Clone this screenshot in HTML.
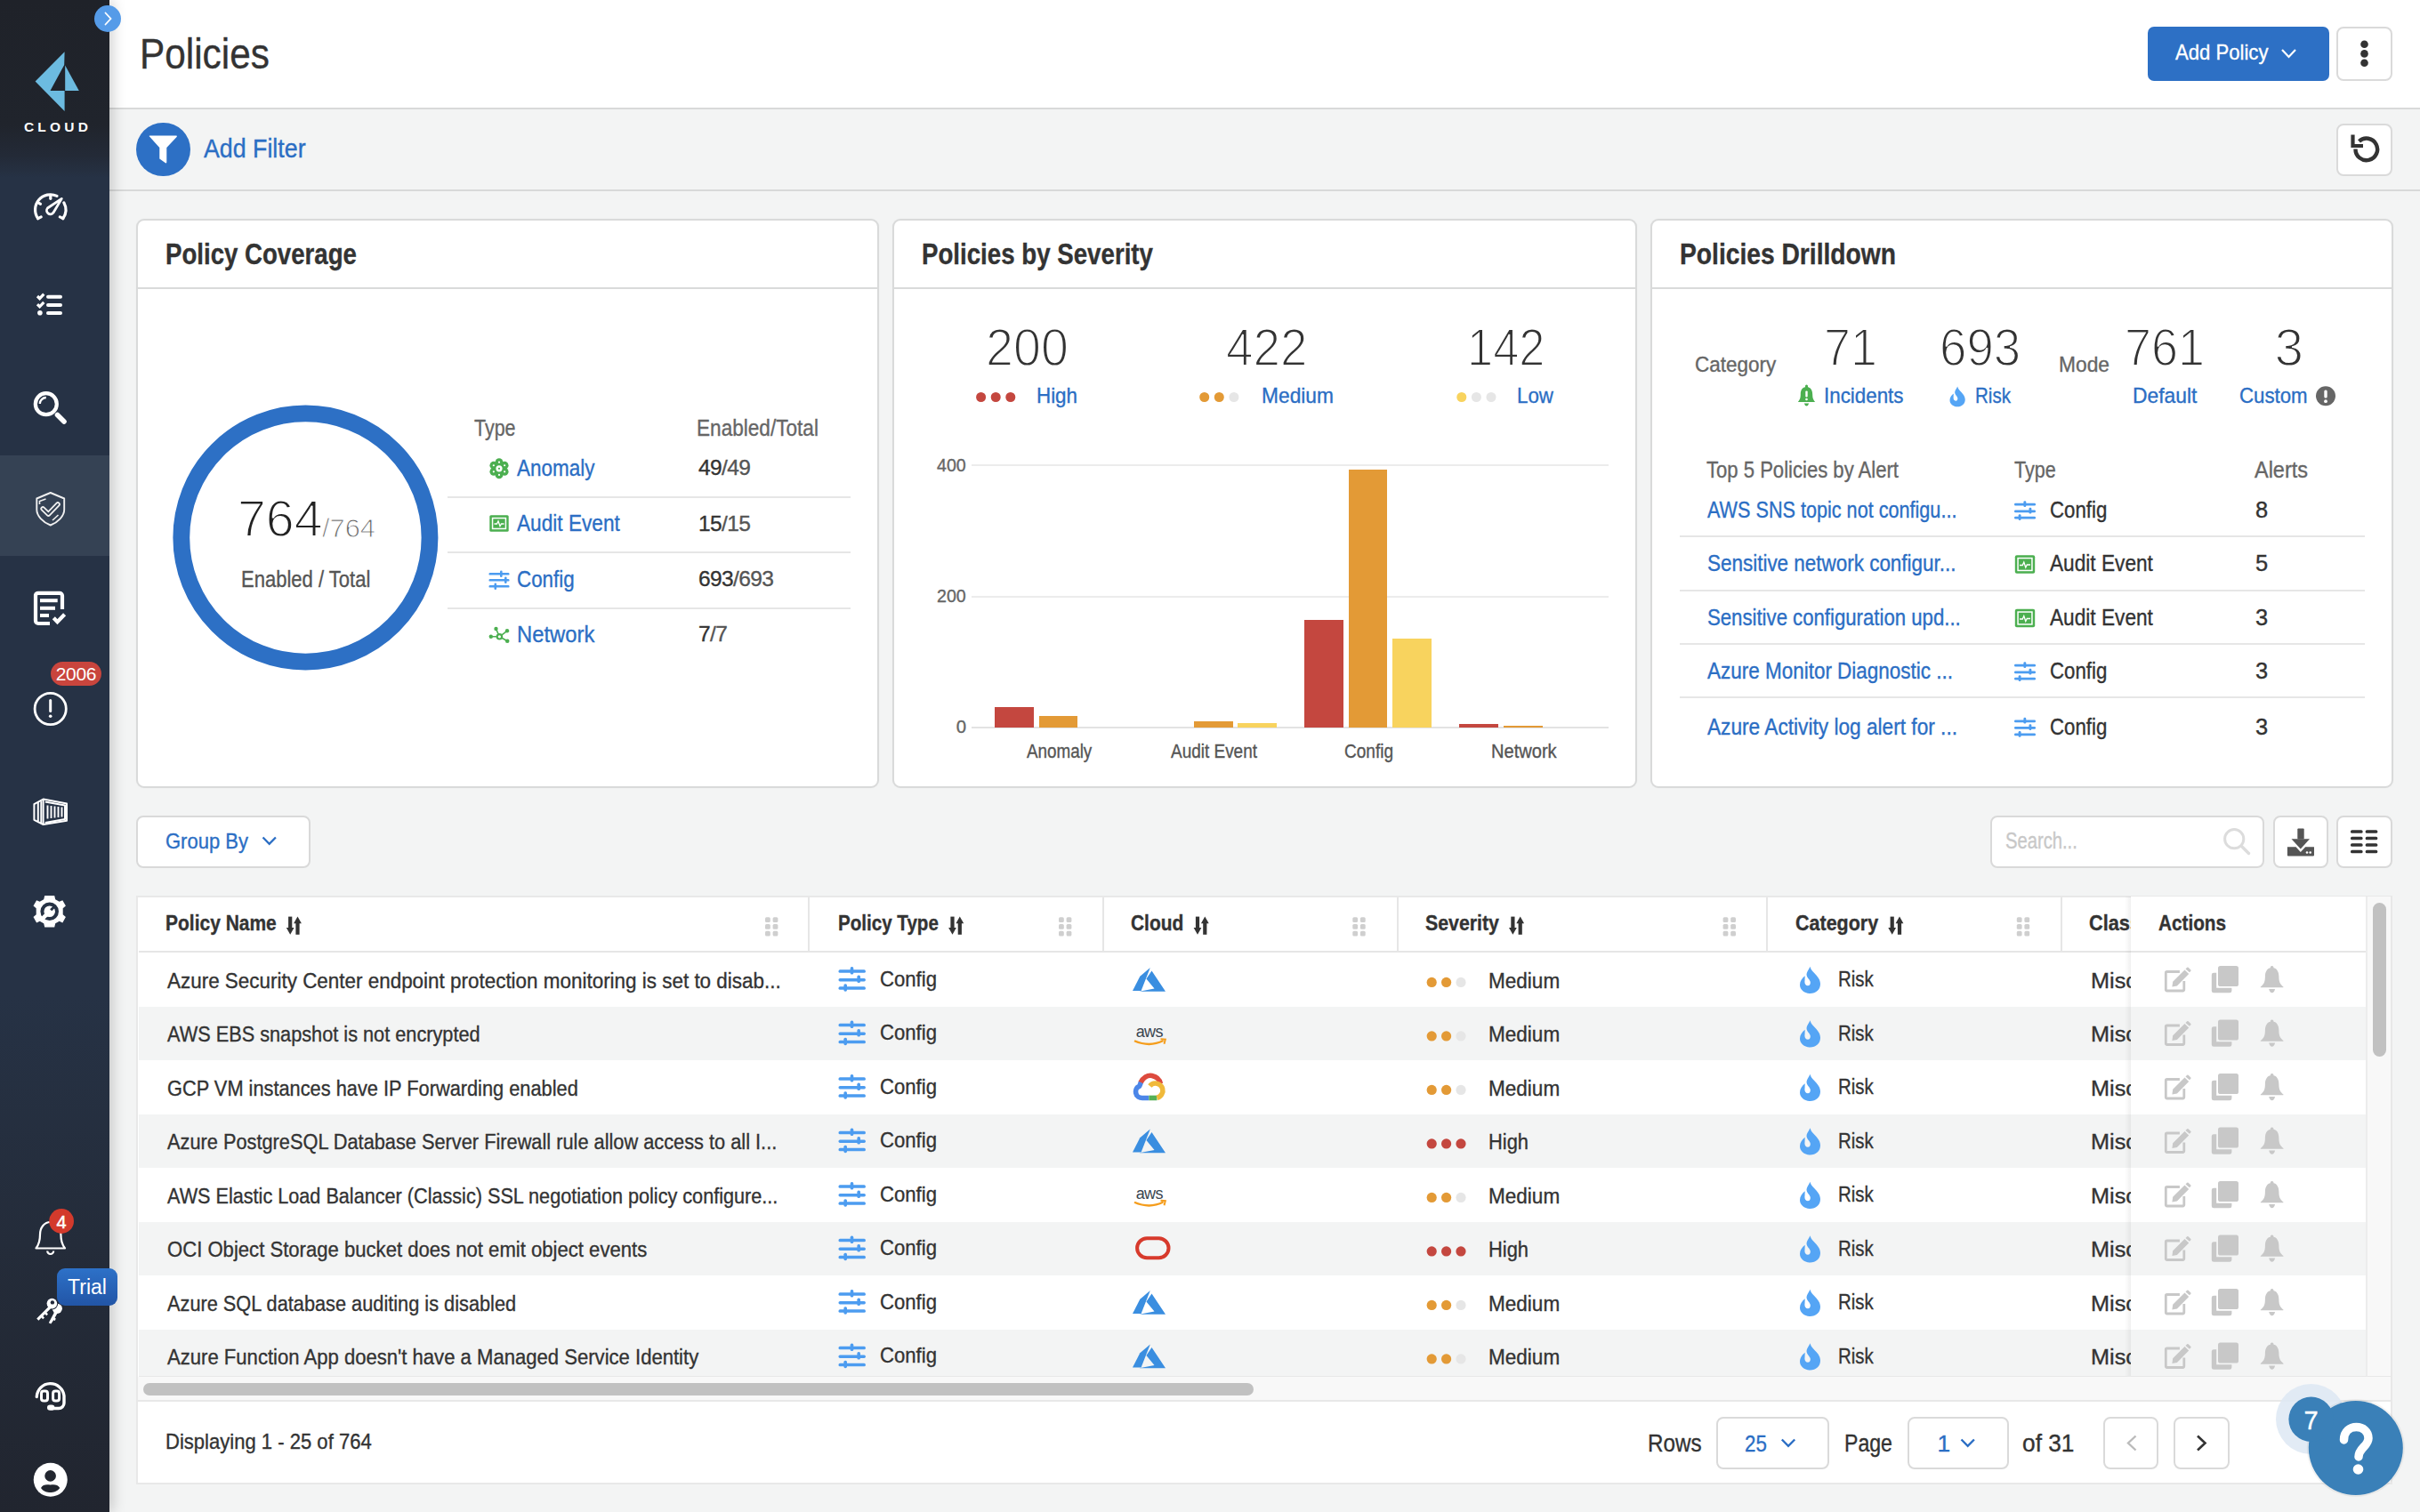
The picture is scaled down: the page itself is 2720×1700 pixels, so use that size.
<!DOCTYPE html>
<html><head><meta charset="utf-8">
<style>
*{box-sizing:border-box;margin:0;padding:0}
html,body{width:2720px;height:1700px;overflow:hidden;background:#f3f4f4;font-family:"Liberation Sans",sans-serif;color:#333}
.a{position:absolute}
.t{position:absolute;white-space:nowrap;-webkit-text-stroke:0.35px currentColor}
#side{position:absolute;left:0;top:0;width:123px;height:1700px;background:linear-gradient(180deg,#1f2229 0px,#20242c 140px,#232a37 175px,#263245 200px,#263245 1120px,#242c3a 1400px,#21252f 1700px);box-shadow:4px 0 14px rgba(0,0,0,.18);z-index:5}
</style></head><body>
<div id="side"><div class="a" style="left:0;top:512px;width:123px;height:113px;background:#354254"></div>
<svg class="a" style="left:0;top:0" width="123" height="1700" viewBox="0 0 123 1700">
<g fill="#6cbbe0"><path d="M72.6 58.2 L39.6 91.5 L72.6 124.9 L72.6 102.1 L56.5 102.1 L72.2 73 Z"/><path d="M73.2 73.5 L88.8 102.1 L73.2 102.1 Z"/></g>
<text x="65" y="148.3" text-anchor="middle" fill="#fff" font-family="Liberation Sans" font-weight="bold" font-size="15.5" letter-spacing="4.2">CLOUD</text>
<g fill="none" stroke="#fff" stroke-width="3.2" stroke-linecap="round">
<path d="M42.7 245.7 A17.1 17.1 0 0 1 64 220.4"/><path d="M71.8 227.8 A17.1 17.1 0 0 1 70.8 245.7"/>
<path d="M42.7 245.7 L46.2 243.9"/><path d="M70.8 245.7 L67.3 243.9"/><path d="M56.8 219.5 L56.8 223.3"/><path d="M42.5 227.6 L45.5 229.3"/>
</g>
<path d="M69.3 223.4 L59.9 239.2 A4.1 4.1 0 1 1 53.4 234 Z" fill="none" stroke="#fff" stroke-width="2.8" stroke-linejoin="round"/>
<g fill="none" stroke="#fff" stroke-width="3.2" stroke-linecap="butt">
<path d="M42 333 L44.6 335.6 L49.3 330.6"/><path d="M42 342.2 L44.6 344.8 L49.3 339.8"/>
</g>
<circle cx="44.9" cy="351.8" r="2.8" fill="#fff"/>
<g stroke="#fff" stroke-width="4" stroke-linecap="round"><path d="M54 333.8 H68"/><path d="M54 343 H68"/><path d="M54 351.9 H68"/></g>
<circle cx="51.8" cy="454.2" r="12" fill="none" stroke="#fff" stroke-width="4.2"/>
<path d="M44.8 454 A7 7 0 0 1 51.8 447" fill="none" stroke="#fff" stroke-width="2.4"/>
<path d="M64.5 466.5 L72 474" stroke="#fff" stroke-width="5.6" stroke-linecap="round"/>
<path d="M56.75 554 L41.3 560.5 L41.3 573 C41.3 580 48 587 56.75 590.5 C65.5 587 72.2 580 72.2 573 L72.2 560.5 Z" fill="none" stroke="#f0f0f0" stroke-width="1.9" stroke-linejoin="round"/>
<path d="M48.2 572 L54.4 578 L65 567" fill="none" stroke="#f0f0f0" stroke-width="5.6" stroke-linecap="round" stroke-linejoin="round"/>
<path d="M48.2 572 L54.4 578 L65 567" fill="none" stroke="#354254" stroke-width="2" stroke-linecap="round" stroke-linejoin="round"/>
<path d="M44.5 567 L44.5 563.5 L51.5 561" fill="none" stroke="#f0f0f0" stroke-width="1.6"/>
<path d="M59 585 L65.5 579" fill="none" stroke="#f0f0f0" stroke-width="1.6"/>
<path d="M56 701 H43 A3 3 0 0 1 40 698 V669 A3 3 0 0 1 43 666.8 H67 A3 3 0 0 1 70 669.8 V685" fill="none" stroke="#fff" stroke-width="4.2"/>
<g stroke="#fff" stroke-width="4"><path d="M45 675.2 H64.7"/><path d="M45 683.8 H62"/><path d="M45 692 H55"/></g>
<path d="M60.3 694.8 L64.5 699.3 L72.6 690.8" fill="none" stroke="#fff" stroke-width="4.2"/>
<circle cx="56.7" cy="797" r="17.6" fill="none" stroke="#fff" stroke-width="2.8"/>
<path d="M56.7 787.5 V799.5" stroke="#fff" stroke-width="3" stroke-linecap="round"/><circle cx="56.7" cy="805.3" r="1.8" fill="#fff"/>
<g fill="none" stroke="#fff" stroke-width="2" stroke-linejoin="round">
<path d="M38.4 904.2 L48.6 898.5 L75 903.4 L75 922.8 L48.6 927 L38.4 921.8 Z"/><path d="M48.6 898.5 V927"/><path d="M42.8 902 V923.5"/><path d="M46.3 900.5 V925"/>
<path d="M50.8 901.5 L73 905.5 V921 L50.8 925"/>
</g>
<g stroke="#fff" stroke-width="1.9"><path d="M53.5 905.5 V920.5"/><path d="M57.5 906 V920"/><path d="M61.5 906.5 V919.5"/><path d="M65.5 907 V919"/><path d="M69.5 907.5 V918.5"/></g>
<g transform="translate(55.7 1024.8)">
<path fill="#fff" d="M-5.5 -17.8 H5.5 L6.5 -13.5 L11 -11 L14.6 -12.6 L18.2 -6.3 L15 -3.5 V3.5 L18.2 6.3 L14.6 12.6 L11 11 L6.5 13.5 L5.5 17.8 H-5.5 L-6.5 13.5 L-11 11 L-14.6 12.6 L-18.2 6.3 L-15 3.5 V-3.5 L-18.2 -6.3 L-14.6 -12.6 L-11 -11 L-6.5 -13.5 Z"/>
<circle r="8.3" fill="none" stroke="#263245" stroke-width="4"/>
<path d="M-9 9 L-2 2" stroke="#fff" stroke-width="4.5"/>
<path d="M1.5 -1.5 L6 -6" stroke="#263245" stroke-width="3"/>
</g>
<path d="M40.5 1403.5 C44 1399 45 1395 45 1388 C45 1380 50 1374 56.7 1374 C63.4 1374 68.4 1380 68.4 1388 C68.4 1395 69.4 1399 73 1403.5 Z" fill="none" stroke="#fff" stroke-width="2.2" stroke-linejoin="round"/>
<path d="M53.2 1406.5 A3.5 3.5 0 0 0 60.2 1406.5" fill="none" stroke="#fff" stroke-width="2.2"/>
<circle cx="69.1" cy="1373" r="13.9" fill="#d33a2c"/>
<text x="69.1" y="1380.5" text-anchor="middle" fill="#fff" stroke="#fff" stroke-width="0.5" font-family="Liberation Sans" font-size="20">4</text>
<g fill="#fff" stroke="none">
<circle cx="64.3" cy="1471.3" r="5.6"/>
<path d="M61.5 1474.5 L54.8 1487.2 L57.3 1488.6 L60.2 1484.2 L61.8 1485 L62.8 1482.6 L61.6 1481.8 L64.6 1476.2 Z"/>
</g>
<circle cx="58.4" cy="1465.6" r="6.8" fill="#22293a"/>
<g fill="#fff" stroke="none">
<circle cx="58.4" cy="1465.6" r="5.8"/>
<path d="M55.4 1468.2 L41.2 1482.6 L43.4 1484.8 L46.6 1481.6 L48.2 1483.2 L50 1481.4 L48.4 1479.8 L50.6 1477.6 L52.2 1479.2 L54 1477.4 L52.4 1475.8 L58.6 1469.8 Z"/>
</g>
<circle cx="58.9" cy="1464.4" r="2.2" fill="#22293a"/>
<path d="M41.3 1570.5 A15.4 15.4 0 0 1 72 1569.4 V1577.5 A6 6 0 0 1 66 1583.5 H58" fill="none" stroke="#fff" stroke-width="3.4" stroke-linecap="round"/>
<rect x="46.5" y="1564.1" width="7" height="10.9" rx="2.6" fill="none" stroke="#fff" stroke-width="3"/>
<rect x="59.6" y="1564.1" width="7" height="10.9" rx="2.6" fill="none" stroke="#fff" stroke-width="3"/>
<rect x="53" y="1579.4" width="8.4" height="6.4" rx="3.2" fill="#fff"/>
<circle cx="56.75" cy="1663.8" r="19" fill="#fff"/>
<circle cx="56.6" cy="1659.4" r="6.3" fill="#22262f"/>
<path d="M46 1673 C48 1668.5 53 1669 56.6 1669.5 C60 1669 65 1668.5 67.3 1673 C64.5 1677 60 1678 56.6 1678 C53 1678 48.5 1677 46 1673 Z" fill="#22262f"/>
</svg>
<div class="a" style="left:57px;top:744px;width:57px;height:27px;border-radius:14px;background:#c9453d;color:#fff;font-size:21px;text-align:center;line-height:27px;letter-spacing:-0.3px">2006</div>
<div class="a" style="left:64px;top:1426px;width:68px;height:42px;border-radius:9px;background:linear-gradient(180deg,#2d71c8,#2255a6);color:#fff;font-size:23px;text-align:center;line-height:42px">Trial</div>
</div>
<div class="a" style="left:105.7px;top:5.8px;width:30.2px;height:30.2px;border-radius:50%;background:#559be8;z-index:6"><svg width="30" height="30" viewBox="0 0 30 30" style="position:absolute;left:0;top:0"><path d="M12.5 8.5 L18.5 15 L12.5 21.5" fill="none" stroke="#fff" stroke-width="1.8" stroke-linecap="round"/></svg></div>
<div class="a" style="left:123px;top:0px;width:2597px;height:121px;background:#fff"></div>
<div class="a" style="left:123px;top:121px;width:2597px;height:2px;background:#d8d9d9"></div>
<div class="a" style="left:123px;top:213px;width:2597px;height:2px;background:#d8d9d9"></div>
<div class="t" style="left:157.0px;top:36.8px;font-size:47.67px;line-height:47.67px;color:#333;transform:scaleX(0.8887);transform-origin:0 0;">Policies</div>
<div class="a" style="left:2414px;top:30px;width:204px;height:61px;background:#2d70c5;border-radius:7px"></div>
<div class="t" style="left:2445.0px;top:47.3px;font-size:24.71px;line-height:24.71px;color:#fff;transform:scaleX(0.8951);transform-origin:0 0;">Add Policy</div>
<svg class="a" style="left:2560px;top:50px" width="26" height="20"><path d="M5 6 L12.5 14 L20 6" fill="none" stroke="#fff" stroke-width="2.2"/></svg>
<div class="a" style="left:2626px;top:30px;width:63px;height:61px;background:#fff;border:2px solid #dadada;border-radius:8px"></div>
<svg class="a" style="left:2640px;top:40px" width="36" height="40"><g fill="#333"><circle cx="17.5" cy="9.8" r="4.3"/><circle cx="17.5" cy="20.4" r="4.3"/><circle cx="17.5" cy="30.8" r="4.3"/></g></svg>
<div class="a" style="left:153.2px;top:137.7px;width:60.4px;height:60.4px;background:#2d70c5;border-radius:50%"></div>
<svg class="a" style="left:153px;top:137px" width="61" height="61"><path d="M15 16.5 Q14 15.8 15.3 15.5 L45.3 15.5 Q46.5 15.8 45.6 17 L34.3 29 L34.3 45.5 Q34 46.8 33 46.3 L26.3 41.5 L26.3 29 Z" fill="#fff"/></svg>
<div class="t" style="left:228.6px;top:153.1px;font-size:28.78px;line-height:28.78px;color:#2b6ec4;transform:scaleX(0.9306);transform-origin:0 0;">Add Filter</div>
<div class="a" style="left:2626px;top:139px;width:63px;height:59px;background:#fff;border:2px solid #dadada;border-radius:8px"></div>
<svg class="a" style="left:2626px;top:139px" width="63" height="59"><path d="M21.5 28.5 A12.3 12.3 0 1 0 25.5 19.8" fill="none" stroke="#333" stroke-width="4.4"/><path d="M18.5 12.5 V25 H30" fill="none" stroke="#333" stroke-width="4.2"/></svg>
<div class="a" style="left:153px;top:245.5px;width:835px;height:640.5px;background:#fff;border:2px solid #d9dada;border-radius:9px;box-shadow:0 0 1.5px rgba(0,0,0,0.05)"></div>
<div class="a" style="left:155px;top:323px;width:831px;height:2px;background:#d9dada"></div>
<div class="t" style="left:185.8px;top:268.9px;font-size:32.99px;line-height:32.99px;color:#333;font-weight:bold;transform:scaleX(0.8375);transform-origin:0 0;">Policy Coverage</div>
<div class="a" style="left:1003px;top:245.5px;width:837px;height:640.5px;background:#fff;border:2px solid #d9dada;border-radius:9px;box-shadow:0 0 1.5px rgba(0,0,0,0.05)"></div>
<div class="a" style="left:1005px;top:323px;width:833px;height:2px;background:#d9dada"></div>
<div class="t" style="left:1035.8px;top:268.9px;font-size:32.99px;line-height:32.99px;color:#333;font-weight:bold;transform:scaleX(0.8389);transform-origin:0 0;">Policies by Severity</div>
<div class="a" style="left:1855px;top:245.5px;width:835px;height:640.5px;background:#fff;border:2px solid #d9dada;border-radius:9px;box-shadow:0 0 1.5px rgba(0,0,0,0.05)"></div>
<div class="a" style="left:1857px;top:323px;width:831px;height:2px;background:#d9dada"></div>
<div class="t" style="left:1887.8px;top:268.9px;font-size:32.99px;line-height:32.99px;color:#333;font-weight:bold;transform:scaleX(0.8551);transform-origin:0 0;">Policies Drilldown</div>
<svg class="a" style="left:190px;top:451px" width="310" height="310"><circle cx="153.4" cy="153.5" r="139.6" fill="none" stroke="#2d70c5" stroke-width="18.8"/></svg>
<div class="t" style="left:267.1px;top:555.2px;font-size:57.85px;line-height:57.85px;color:#222;transform:scaleX(0.9908);transform-origin:0 0;-webkit-text-stroke:1.8px #fff;">764</div>
<div class="t" style="left:362.2px;top:578.5px;font-size:29.94px;line-height:29.94px;color:#666;transform:scaleX(1.0297);transform-origin:0 0;-webkit-text-stroke:1px #fff;">/764</div>
<div class="t" style="left:271.0px;top:638.6px;font-size:25.29px;line-height:25.29px;color:#555;transform:scaleX(0.8713);transform-origin:0 0;">Enabled / Total</div>
<div class="t" style="left:533.0px;top:468.6px;font-size:25.29px;line-height:25.29px;color:#666;transform:scaleX(0.8481);transform-origin:0 0;">Type</div>
<div class="t" style="left:783.0px;top:468.6px;font-size:25.29px;line-height:25.29px;color:#666;transform:scaleX(0.8939);transform-origin:0 0;">Enabled/Total</div>
<div class="t" style="left:581.0px;top:512.5px;font-size:26.60px;line-height:26.60px;color:#2b6ec4;transform:scaleX(0.8445);transform-origin:0 0;">Anomaly</div>
<div class="t" style="left:785.0px;top:514.3px;font-size:24.50px;line-height:24.50px;color:#333;letter-spacing:-0.6px;">49<span style="color:#555">/49</span></div>
<div class="t" style="left:581.0px;top:575.0px;font-size:26.60px;line-height:26.60px;color:#2b6ec4;transform:scaleX(0.8513);transform-origin:0 0;">Audit Event</div>
<div class="t" style="left:785.0px;top:576.8px;font-size:24.50px;line-height:24.50px;color:#333;letter-spacing:-0.6px;">15<span style="color:#555">/15</span></div>
<div class="t" style="left:581.0px;top:637.5px;font-size:26.60px;line-height:26.60px;color:#2b6ec4;transform:scaleX(0.8414);transform-origin:0 0;">Config</div>
<div class="t" style="left:785.0px;top:639.3px;font-size:24.50px;line-height:24.50px;color:#333;letter-spacing:-0.6px;">693<span style="color:#555">/693</span></div>
<div class="t" style="left:581.0px;top:699.5px;font-size:26.60px;line-height:26.60px;color:#2b6ec4;transform:scaleX(0.8953);transform-origin:0 0;">Network</div>
<div class="t" style="left:785.0px;top:701.3px;font-size:24.50px;line-height:24.50px;color:#333;letter-spacing:-0.6px;">7<span style="color:#555">/7</span></div>
<div class="a" style="left:503px;top:557.5px;width:453px;height:2px;background:#e6e6e6"></div>
<div class="a" style="left:503px;top:620px;width:453px;height:2px;background:#e6e6e6"></div>
<div class="a" style="left:503px;top:683px;width:453px;height:2px;background:#e6e6e6"></div>
<svg class="a" style="left:545px;top:510px" width="32" height="220">
<g fill="#4caf50"><circle cx="16.00" cy="9.70" r="4.4"/><circle cx="22.15" cy="13.25" r="4.4"/><circle cx="22.15" cy="20.35" r="4.4"/><circle cx="16.00" cy="23.90" r="4.4"/><circle cx="9.85" cy="20.35" r="4.4"/><circle cx="9.85" cy="13.25" r="4.4"/><circle cx="16" cy="16.799999999999955" r="6.5"/></g><g fill="#fff"><circle cx="16.00" cy="9.70" r="1.1"/><circle cx="22.15" cy="13.25" r="1.1"/><circle cx="22.15" cy="20.35" r="1.1"/><circle cx="16.00" cy="23.90" r="1.1"/><circle cx="9.85" cy="20.35" r="1.1"/><circle cx="9.85" cy="13.25" r="1.1"/><circle cx="16" cy="16.799999999999955" r="3.6"/></g><circle cx="16" cy="16.799999999999955" r="1.1" fill="#4caf50"/>
<g transform="translate(4.5 68.5)"><rect x="0.8" y="0.8" width="21.4" height="18.4" rx="1.5" fill="#4caf50"/><rect x="3.3" y="3.3" width="16.4" height="13.4" fill="#fff"/><rect x="4.8" y="4.8" width="13.4" height="10.4" fill="#4caf50"/><path d="M6 10.5 H9 L10.5 7.5 L12.5 13 L14 10.5 H17" fill="none" stroke="#fff" stroke-width="1.3"/></g>
<g transform="translate(4.5 131)" fill="#4c9cf0"><rect x="0" y="3" width="23" height="2.6" rx="1.2"/><rect x="0" y="10" width="23" height="2.6" rx="1.2"/><rect x="0" y="17" width="23" height="2.6" rx="1.2"/><rect x="12.5" y="0.5" width="2.6" height="7.5" rx="1.2"/><rect x="17.5" y="7.5" width="2.6" height="7.5" rx="1.2"/><rect x="6" y="14.5" width="2.6" height="7.5" rx="1.2"/></g>
<g fill="#4caf50" stroke="#4caf50"><path d="M6.8 205.8 L16.4 205.8 M12.5 197.0 L16.4 205.8 M25.0 199.3 L16.4 205.8 M25.2 210.8 L16.4 205.8" stroke-width="1.6" fill="none"/><circle cx="6.8" cy="205.8" r="2.2" stroke="none"/><circle cx="12.5" cy="197.0" r="2.2" stroke="none"/><circle cx="25.0" cy="199.3" r="2.2" stroke="none"/><circle cx="25.2" cy="210.8" r="2.3" stroke="none"/><circle cx="16.4" cy="205.8" r="3.8" stroke="none"/></g><circle cx="16.4" cy="205.8" r="1.6" fill="#fff"/>
</svg>
<div class="t" style="left:1108.1px;top:361.7px;font-size:58.43px;line-height:58.43px;color:#333;transform:scaleX(0.9522);transform-origin:0 0;-webkit-text-stroke:1.8px #fff;">200</div>
<div class="t" style="left:1378.1px;top:361.7px;font-size:58.43px;line-height:58.43px;color:#333;transform:scaleX(0.9378);transform-origin:0 0;-webkit-text-stroke:1.8px #fff;">422</div>
<div class="t" style="left:1648.5px;top:361.7px;font-size:58.43px;line-height:58.43px;color:#333;transform:scaleX(0.8968);transform-origin:0 0;-webkit-text-stroke:1.8px #fff;">142</div>
<svg class="a" style="left:1004px;top:240px" width="835" height="640"><circle cx="98.6" cy="206.5" r="5.5" fill="#c4473f"/><circle cx="115.2" cy="206.5" r="5.5" fill="#c4473f"/><circle cx="131.8" cy="206.5" r="5.5" fill="#c4473f"/><circle cx="349.7" cy="206.5" r="5.5" fill="#e39a36"/><circle cx="366.3" cy="206.5" r="5.5" fill="#e39a36"/><circle cx="382.9" cy="206.5" r="5.5" fill="#e6e6e6"/><circle cx="638.8" cy="206.5" r="5.5" fill="#f8d35e"/><circle cx="655.4" cy="206.5" r="5.5" fill="#e6e6e6"/><circle cx="672.0" cy="206.5" r="5.5" fill="#e6e6e6"/></svg>
<div class="t" style="left:1165.0px;top:433.0px;font-size:24.13px;line-height:24.13px;color:#2b6ec4;transform:scaleX(0.9268);transform-origin:0 0;">High</div>
<div class="t" style="left:1418.0px;top:433.0px;font-size:24.13px;line-height:24.13px;color:#2b6ec4;transform:scaleX(0.9438);transform-origin:0 0;">Medium</div>
<div class="t" style="left:1705.0px;top:433.0px;font-size:24.13px;line-height:24.13px;color:#2b6ec4;transform:scaleX(0.9250);transform-origin:0 0;">Low</div>
<div class="a" style="left:1092px;top:522px;width:716px;height:2px;background:#ececec"></div>
<div class="a" style="left:1092px;top:669.5px;width:716px;height:2px;background:#ececec"></div>
<div class="a" style="left:1092px;top:816.5px;width:716px;height:2px;background:#e3e3e3"></div>
<div class="t" style="left:1053.3px;top:512.8px;font-size:20.35px;line-height:20.35px;color:#666;transform:scaleX(0.9634);transform-origin:0 0;">400</div>
<div class="t" style="left:1053.3px;top:660.3px;font-size:20.35px;line-height:20.35px;color:#666;transform:scaleX(0.9634);transform-origin:0 0;">200</div>
<div class="t" style="left:1074.7px;top:807.4px;font-size:20.35px;line-height:20.35px;color:#666;">0</div>
<div class="a" style="left:1118px;top:795px;width:43.6px;height:22.600000000000023px;background:#c4473f"></div>
<div class="a" style="left:1167.6px;top:804.6px;width:43.6px;height:13.0px;background:#e39a36"></div>
<div class="a" style="left:1342px;top:810.6px;width:43.6px;height:7.0px;background:#e39a36"></div>
<div class="a" style="left:1391px;top:813px;width:43.6px;height:4.600000000000023px;background:#f8d35e"></div>
<div class="a" style="left:1466px;top:696.6px;width:43.6px;height:121.0px;background:#c4473f"></div>
<div class="a" style="left:1515.6px;top:528px;width:43.6px;height:289.6px;background:#e39a36"></div>
<div class="a" style="left:1565px;top:717.6px;width:43.6px;height:100.0px;background:#f8d35e"></div>
<div class="a" style="left:1640px;top:813.6px;width:43.6px;height:4.0px;background:#c4473f"></div>
<div class="a" style="left:1690px;top:816px;width:43.6px;height:1.6000000000000227px;background:#e39a36"></div>
<div class="t" style="left:1153.8px;top:834.0px;font-size:21.80px;line-height:21.80px;color:#555;transform:scaleX(0.8641);transform-origin:0 0;">Anomaly</div>
<div class="t" style="left:1315.7px;top:834.0px;font-size:21.80px;line-height:21.80px;color:#555;transform:scaleX(0.8700);transform-origin:0 0;">Audit Event</div>
<div class="t" style="left:1511.0px;top:834.0px;font-size:21.80px;line-height:21.80px;color:#555;transform:scaleX(0.8726);transform-origin:0 0;">Config</div>
<div class="t" style="left:1675.7px;top:834.0px;font-size:21.80px;line-height:21.80px;color:#555;transform:scaleX(0.9211);transform-origin:0 0;">Network</div>
<div class="t" style="left:2050.0px;top:361.7px;font-size:58.43px;line-height:58.43px;color:#333;transform:scaleX(0.9219);transform-origin:0 0;-webkit-text-stroke:1.8px #fff;">71</div>
<div class="t" style="left:2179.7px;top:361.7px;font-size:58.43px;line-height:58.43px;color:#333;transform:scaleX(0.9358);transform-origin:0 0;-webkit-text-stroke:1.8px #fff;">693</div>
<div class="t" style="left:2388.4px;top:361.7px;font-size:58.43px;line-height:58.43px;color:#333;transform:scaleX(0.9234);transform-origin:0 0;-webkit-text-stroke:1.8px #fff;">761</div>
<div class="t" style="left:2556.5px;top:361.7px;font-size:58.43px;line-height:58.43px;color:#333;-webkit-text-stroke:1.8px #fff;">3</div>
<div class="t" style="left:1904.9px;top:399.4px;font-size:23.69px;line-height:23.69px;color:#666;transform:scaleX(0.9496);transform-origin:0 0;">Category</div>
<div class="t" style="left:2314.0px;top:399.4px;font-size:23.69px;line-height:23.69px;color:#666;transform:scaleX(0.9620);transform-origin:0 0;">Mode</div>
<div class="t" style="left:2050.0px;top:433.0px;font-size:24.13px;line-height:24.13px;color:#2b6ec4;transform:scaleX(0.9269);transform-origin:0 0;">Incidents</div>
<div class="t" style="left:2220.0px;top:433.0px;font-size:24.13px;line-height:24.13px;color:#2b6ec4;transform:scaleX(0.8519);transform-origin:0 0;">Risk</div>
<div class="t" style="left:2396.6px;top:433.0px;font-size:24.13px;line-height:24.13px;color:#2b6ec4;transform:scaleX(0.9472);transform-origin:0 0;">Default</div>
<div class="t" style="left:2517.0px;top:433.0px;font-size:24.13px;line-height:24.13px;color:#2b6ec4;transform:scaleX(0.9216);transform-origin:0 0;">Custom</div>
<svg class="a" style="left:2015px;top:430px" width="620" height="32"><path d="M15.5 5 C10.5 5 8.8 9 8.8 13.5 C8.8 18 7.5 20 5.8 22 H25.2 C23.5 20 22.2 18 22.2 13.5 C22.2 9 20.5 5 15.5 5 Z" fill="#4caf50"/><rect x="14" y="2.5" width="3" height="4" rx="1.5" fill="#4caf50"/><path d="M12.8 23.5 H18.2 Q17.3 26.5 15.5 26.5 Q13.7 26.5 12.8 23.5 Z" fill="#4caf50"/><rect x="14.3" y="9.5" width="2.4" height="7" rx="1" fill="#fff"/><circle cx="15.5" cy="19" r="1.3" fill="#fff"/><path transform="translate(176.5 4.5) scale(0.75)" fill="#55a5f5" d="M11.5 0 C10.5 3 7.5 5.5 7.5 9 C7.5 12 10.5 14 11.5 16.5 C12.5 19 11 21.5 9 21.5 C6.5 21.5 5 19 5.5 16 L5.7 10.5 C2.5 13 0 16.5 0 20.5 C0 26 5 30.2 11.5 30.2 C18 30.2 23 26 23 19.5 C23 13 17.5 9 14.5 5.5 C13 4 12 2 11.5 0 Z"/><circle cx="599" cy="15.2" r="11" fill="#666"/><rect x="597.3" y="8.5" width="3.4" height="9" rx="1.5" fill="#fff"/><circle cx="599" cy="21.2" r="1.9" fill="#fff"/></svg>
<div class="t" style="left:1917.7px;top:515.5px;font-size:25.44px;line-height:25.44px;color:#666;transform:scaleX(0.8680);transform-origin:0 0;">Top 5 Policies by Alert</div>
<div class="t" style="left:2264.0px;top:515.5px;font-size:25.44px;line-height:25.44px;color:#666;transform:scaleX(0.8469);transform-origin:0 0;">Type</div>
<div class="t" style="left:2533.6px;top:515.5px;font-size:25.44px;line-height:25.44px;color:#666;transform:scaleX(0.9229);transform-origin:0 0;">Alerts</div>
<div class="t" style="left:1919.0px;top:561.3px;font-size:25.44px;line-height:25.44px;color:#2b6ec4;transform:scaleX(0.8500);transform-origin:0 0;">AWS SNS topic not configu...</div>
<div class="t" style="left:2304.0px;top:561.3px;font-size:25.44px;line-height:25.44px;color:#333;transform:scaleX(0.8744);transform-origin:0 0;">Config</div>
<div class="t" style="left:2535.0px;top:561.3px;font-size:25.44px;line-height:25.44px;color:#333;">8</div>
<div class="t" style="left:1919.0px;top:621.3px;font-size:25.44px;line-height:25.44px;color:#2b6ec4;transform:scaleX(0.8825);transform-origin:0 0;">Sensitive network configur...</div>
<div class="t" style="left:2304.0px;top:621.3px;font-size:25.44px;line-height:25.44px;color:#333;transform:scaleX(0.8910);transform-origin:0 0;">Audit Event</div>
<div class="t" style="left:2535.0px;top:621.3px;font-size:25.44px;line-height:25.44px;color:#333;">5</div>
<div class="t" style="left:1919.0px;top:681.8px;font-size:25.44px;line-height:25.44px;color:#2b6ec4;transform:scaleX(0.8716);transform-origin:0 0;">Sensitive configuration upd...</div>
<div class="t" style="left:2304.0px;top:681.8px;font-size:25.44px;line-height:25.44px;color:#333;transform:scaleX(0.8910);transform-origin:0 0;">Audit Event</div>
<div class="t" style="left:2535.0px;top:681.8px;font-size:25.44px;line-height:25.44px;color:#333;">3</div>
<div class="t" style="left:1919.0px;top:742.3px;font-size:25.44px;line-height:25.44px;color:#2b6ec4;transform:scaleX(0.8834);transform-origin:0 0;">Azure Monitor Diagnostic ...</div>
<div class="t" style="left:2304.0px;top:742.3px;font-size:25.44px;line-height:25.44px;color:#333;transform:scaleX(0.8744);transform-origin:0 0;">Config</div>
<div class="t" style="left:2535.0px;top:742.3px;font-size:25.44px;line-height:25.44px;color:#333;">3</div>
<div class="t" style="left:1919.0px;top:804.9px;font-size:25.44px;line-height:25.44px;color:#2b6ec4;transform:scaleX(0.8913);transform-origin:0 0;">Azure Activity log alert for ...</div>
<div class="t" style="left:2304.0px;top:804.9px;font-size:25.44px;line-height:25.44px;color:#333;transform:scaleX(0.8744);transform-origin:0 0;">Config</div>
<div class="t" style="left:2535.0px;top:804.9px;font-size:25.44px;line-height:25.44px;color:#333;">3</div>
<div class="a" style="left:1888px;top:602px;width:770px;height:2px;background:#e6e6e6"></div>
<div class="a" style="left:1888px;top:662.5px;width:770px;height:2px;background:#e6e6e6"></div>
<div class="a" style="left:1888px;top:722.7px;width:770px;height:2px;background:#e6e6e6"></div>
<div class="a" style="left:1888px;top:783.4px;width:770px;height:2px;background:#e6e6e6"></div>
<svg class="a" style="left:2260px;top:555px" width="40" height="280"><g transform="translate(4 8) scale(0.79)" fill="#4c9cf0"><rect x="0" y="3.6" width="30.4" height="3.5" rx="1.6"/><rect x="0" y="13.2" width="30.4" height="3.5" rx="1.6"/><rect x="0" y="22.6" width="30.4" height="3.5" rx="1.6"/><rect x="13.2" y="0.3" width="3.6" height="8.5" rx="1.6"/><rect x="20.9" y="9.8" width="3.6" height="8.5" rx="1.6"/><rect x="5.9" y="19.4" width="3.6" height="8.5" rx="1.6"/></g><g transform="translate(4 68.5) scale(1.0)"><rect x="0.8" y="0.8" width="22.4" height="20.4" rx="2" fill="#4caf50"/><rect x="3.3" y="3.3" width="17.4" height="15.4" fill="#fff"/><rect x="4.8" y="4.8" width="14.4" height="12.4" fill="#4caf50"/><path d="M6 12 H9.3 L10.8 8.5 L12.8 14.5 L14.3 11.5 H18" fill="none" stroke="#fff" stroke-width="1.3"/></g><g transform="translate(4 129.0) scale(1.0)"><rect x="0.8" y="0.8" width="22.4" height="20.4" rx="2" fill="#4caf50"/><rect x="3.3" y="3.3" width="17.4" height="15.4" fill="#fff"/><rect x="4.8" y="4.8" width="14.4" height="12.4" fill="#4caf50"/><path d="M6 12 H9.3 L10.8 8.5 L12.8 14.5 L14.3 11.5 H18" fill="none" stroke="#fff" stroke-width="1.3"/></g><g transform="translate(4 189) scale(0.79)" fill="#4c9cf0"><rect x="0" y="3.6" width="30.4" height="3.5" rx="1.6"/><rect x="0" y="13.2" width="30.4" height="3.5" rx="1.6"/><rect x="0" y="22.6" width="30.4" height="3.5" rx="1.6"/><rect x="13.2" y="0.3" width="3.6" height="8.5" rx="1.6"/><rect x="20.9" y="9.8" width="3.6" height="8.5" rx="1.6"/><rect x="5.9" y="19.4" width="3.6" height="8.5" rx="1.6"/></g><g transform="translate(4 251.60000000000002) scale(0.79)" fill="#4c9cf0"><rect x="0" y="3.6" width="30.4" height="3.5" rx="1.6"/><rect x="0" y="13.2" width="30.4" height="3.5" rx="1.6"/><rect x="0" y="22.6" width="30.4" height="3.5" rx="1.6"/><rect x="13.2" y="0.3" width="3.6" height="8.5" rx="1.6"/><rect x="20.9" y="9.8" width="3.6" height="8.5" rx="1.6"/><rect x="5.9" y="19.4" width="3.6" height="8.5" rx="1.6"/></g></svg>
<div class="a" style="left:153px;top:916.5px;width:196px;height:59.5px;background:#fff;border:2px solid #d9d9d9;border-radius:8px"></div>
<div class="t" style="left:185.7px;top:933.8px;font-size:24.71px;line-height:24.71px;color:#2b6ec4;transform:scaleX(0.8901);transform-origin:0 0;">Group By</div>
<svg class="a" style="left:290px;top:935px" width="26" height="22"><path d="M5.5 6.5 L12.7 13.8 L19.9 6.5" fill="none" stroke="#2b6ec4" stroke-width="2.3"/></svg>
<div class="a" style="left:2237px;top:916.5px;width:308px;height:59.5px;background:#fff;border:2px solid #d9d9d9;border-radius:8px"></div>
<div class="t" style="left:2254.0px;top:932.9px;font-size:25.44px;line-height:25.44px;color:#c8c8c8;transform:scaleX(0.7938);transform-origin:0 0;">Search...</div>
<svg class="a" style="left:2490px;top:925px" width="45" height="45"><circle cx="21.2" cy="18.2" r="10.6" fill="none" stroke="#dcdcdc" stroke-width="3"/><path d="M29.5 26.5 L37.5 34.5" stroke="#dcdcdc" stroke-width="3.4" stroke-linecap="round"/></svg>
<div class="a" style="left:2554.5px;top:916.5px;width:62.5px;height:59.5px;background:#fff;border:2px solid #d9d9d9;border-radius:8px"></div>
<svg class="a" style="left:2554px;top:917px" width="63" height="59"><g fill="#555"><rect x="28.3" y="14.4" width="7.4" height="12" rx="1"/><path d="M21.5 26.2 H42 L31.8 37.5 Z"/><path d="M16.9 35.3 H26.5 L31.8 41 L37.2 35.3 H46.9 Q47 35.3 47 36 V44.5 Q46.9 45.4 46 45.4 H17.8 Q16.9 45.4 16.9 44.5 Z"/></g><circle cx="39" cy="41.5" r="1.3" fill="#fff"/><circle cx="42.7" cy="41.5" r="1.3" fill="#fff"/></svg>
<div class="a" style="left:2626.4px;top:916.5px;width:62.5px;height:59.5px;background:#fff;border:2px solid #d9d9d9;border-radius:8px"></div>
<svg class="a" style="left:2626px;top:917px" width="63" height="59"><g fill="#333"><rect x="16" y="16.25" width="13.6" height="3.5" rx="1.6"/><rect x="16" y="23.75" width="13.6" height="3.5" rx="1.6"/><rect x="16" y="31.25" width="13.6" height="3.5" rx="1.6"/><rect x="16" y="38.75" width="13.6" height="3.5" rx="1.6"/><rect x="32.7" y="16.25" width="13.6" height="3.5" rx="1.6"/><rect x="32.7" y="23.75" width="13.6" height="3.5" rx="1.6"/><rect x="32.7" y="31.25" width="13.6" height="3.5" rx="1.6"/><rect x="32.7" y="38.75" width="13.6" height="3.5" rx="1.6"/></g></svg>
<div class="a" style="left:153px;top:1007px;width:2536px;height:570px;background:#fff;border:2px solid #e8e8e8;border-bottom:none"></div>
<div class="a" style="left:156px;top:1069px;width:2503px;height:2px;background:#e6e6e6"></div>
<div class="a" style="left:908.3px;top:1009px;width:2px;height:60px;background:#e6e6e6"></div>
<div class="a" style="left:1238.5px;top:1009px;width:2px;height:60px;background:#e6e6e6"></div>
<div class="a" style="left:1569.5px;top:1009px;width:2px;height:60px;background:#e6e6e6"></div>
<div class="a" style="left:1985px;top:1009px;width:2px;height:60px;background:#e6e6e6"></div>
<div class="a" style="left:2316px;top:1009px;width:2px;height:60px;background:#e6e6e6"></div>
<div class="t" style="left:185.7px;top:1026.7px;font-size:23.69px;line-height:23.69px;color:#333;font-weight:bold;transform:scaleX(0.8858);transform-origin:0 0;">Policy Name</div>
<div class="t" style="left:941.9px;top:1026.7px;font-size:23.69px;line-height:23.69px;color:#333;font-weight:bold;transform:scaleX(0.8691);transform-origin:0 0;">Policy Type</div>
<div class="t" style="left:1271.0px;top:1026.7px;font-size:23.69px;line-height:23.69px;color:#333;font-weight:bold;transform:scaleX(0.8835);transform-origin:0 0;">Cloud</div>
<div class="t" style="left:1601.7px;top:1026.7px;font-size:23.69px;line-height:23.69px;color:#333;font-weight:bold;transform:scaleX(0.9001);transform-origin:0 0;">Severity</div>
<div class="t" style="left:2017.8px;top:1026.7px;font-size:23.69px;line-height:23.69px;color:#333;font-weight:bold;transform:scaleX(0.9075);transform-origin:0 0;">Category</div>
<svg class="a" style="left:0;top:1025px" width="2400" height="32"><g transform="translate(321.8 5.6)" fill="#333"><rect x="2.3" y="0" width="4.2" height="15" /><path d="M0 12.5 H8.8 L4.4 20.2 Z"/><rect x="10.6" y="5.2" width="4.2" height="15"/><path d="M8.3 7.7 H17.1 L12.7 0 Z"/></g><g transform="translate(1066.1 5.6)" fill="#333"><rect x="2.3" y="0" width="4.2" height="15" /><path d="M0 12.5 H8.8 L4.4 20.2 Z"/><rect x="10.6" y="5.2" width="4.2" height="15"/><path d="M8.3 7.7 H17.1 L12.7 0 Z"/></g><g transform="translate(1341.6 5.6)" fill="#333"><rect x="2.3" y="0" width="4.2" height="15" /><path d="M0 12.5 H8.8 L4.4 20.2 Z"/><rect x="10.6" y="5.2" width="4.2" height="15"/><path d="M8.3 7.7 H17.1 L12.7 0 Z"/></g><g transform="translate(1696.0 5.6)" fill="#333"><rect x="2.3" y="0" width="4.2" height="15" /><path d="M0 12.5 H8.8 L4.4 20.2 Z"/><rect x="10.6" y="5.2" width="4.2" height="15"/><path d="M8.3 7.7 H17.1 L12.7 0 Z"/></g><g transform="translate(2122.3 5.6)" fill="#333"><rect x="2.3" y="0" width="4.2" height="15" /><path d="M0 12.5 H8.8 L4.4 20.2 Z"/><rect x="10.6" y="5.2" width="4.2" height="15"/><path d="M8.3 7.7 H17.1 L12.7 0 Z"/></g></svg>
<svg class="a" style="left:0;top:1025px" width="2400" height="32"><rect x="860.0" y="6.2" width="5.8" height="5.8" rx="1.6" fill="#cfcfcf"/><rect x="860.0" y="14.0" width="5.8" height="5.8" rx="1.6" fill="#cfcfcf"/><rect x="860.0" y="21.8" width="5.8" height="5.8" rx="1.6" fill="#cfcfcf"/><rect x="868.6" y="6.2" width="5.8" height="5.8" rx="1.6" fill="#cfcfcf"/><rect x="868.6" y="14.0" width="5.8" height="5.8" rx="1.6" fill="#cfcfcf"/><rect x="868.6" y="21.8" width="5.8" height="5.8" rx="1.6" fill="#cfcfcf"/><rect x="1190.0" y="6.2" width="5.8" height="5.8" rx="1.6" fill="#cfcfcf"/><rect x="1190.0" y="14.0" width="5.8" height="5.8" rx="1.6" fill="#cfcfcf"/><rect x="1190.0" y="21.8" width="5.8" height="5.8" rx="1.6" fill="#cfcfcf"/><rect x="1198.6" y="6.2" width="5.8" height="5.8" rx="1.6" fill="#cfcfcf"/><rect x="1198.6" y="14.0" width="5.8" height="5.8" rx="1.6" fill="#cfcfcf"/><rect x="1198.6" y="21.8" width="5.8" height="5.8" rx="1.6" fill="#cfcfcf"/><rect x="1520.3" y="6.2" width="5.8" height="5.8" rx="1.6" fill="#cfcfcf"/><rect x="1520.3" y="14.0" width="5.8" height="5.8" rx="1.6" fill="#cfcfcf"/><rect x="1520.3" y="21.8" width="5.8" height="5.8" rx="1.6" fill="#cfcfcf"/><rect x="1528.9" y="6.2" width="5.8" height="5.8" rx="1.6" fill="#cfcfcf"/><rect x="1528.9" y="14.0" width="5.8" height="5.8" rx="1.6" fill="#cfcfcf"/><rect x="1528.9" y="21.8" width="5.8" height="5.8" rx="1.6" fill="#cfcfcf"/><rect x="1936.6" y="6.2" width="5.8" height="5.8" rx="1.6" fill="#cfcfcf"/><rect x="1936.6" y="14.0" width="5.8" height="5.8" rx="1.6" fill="#cfcfcf"/><rect x="1936.6" y="21.8" width="5.8" height="5.8" rx="1.6" fill="#cfcfcf"/><rect x="1945.2" y="6.2" width="5.8" height="5.8" rx="1.6" fill="#cfcfcf"/><rect x="1945.2" y="14.0" width="5.8" height="5.8" rx="1.6" fill="#cfcfcf"/><rect x="1945.2" y="21.8" width="5.8" height="5.8" rx="1.6" fill="#cfcfcf"/><rect x="2266.8" y="6.2" width="5.8" height="5.8" rx="1.6" fill="#cfcfcf"/><rect x="2266.8" y="14.0" width="5.8" height="5.8" rx="1.6" fill="#cfcfcf"/><rect x="2266.8" y="21.8" width="5.8" height="5.8" rx="1.6" fill="#cfcfcf"/><rect x="2275.4" y="6.2" width="5.8" height="5.8" rx="1.6" fill="#cfcfcf"/><rect x="2275.4" y="14.0" width="5.8" height="5.8" rx="1.6" fill="#cfcfcf"/><rect x="2275.4" y="21.8" width="5.8" height="5.8" rx="1.6" fill="#cfcfcf"/></svg>
<div class="t" style="left:2348.0px;top:1026.7px;font-size:23.69px;line-height:23.69px;color:#333;font-weight:bold;transform:scaleX(0.9176);transform-origin:0 0;">Class</div>
<div class="a" style="left:156px;top:1071px;width:2503px;height:476.5px;overflow:hidden">
<div class="t" style="left:31.5px;top:19.7px;font-size:24.42px;line-height:24.42px;color:#333;transform:scaleX(0.9193);transform-origin:0 0;">Azure Security Center endpoint protection monitoring is set to disab...</div>
<div class="t" style="left:832.8px;top:17.5px;font-size:23.84px;line-height:23.84px;color:#333;transform:scaleX(0.9287);transform-origin:0 0;">Config</div>
<div class="t" style="left:1517.0px;top:19.8px;font-size:24.42px;line-height:24.42px;color:#333;transform:scaleX(0.9234);transform-origin:0 0;">Medium</div>
<div class="t" style="left:1910.4px;top:18.0px;font-size:24.42px;line-height:24.42px;color:#333;transform:scaleX(0.8355);transform-origin:0 0;">Risk</div>
<div class="t" style="left:2194.0px;top:19.7px;font-size:24.42px;line-height:24.42px;color:#333;transform:scaleX(1.0363);transform-origin:0 0;">Misc</div>
<div class="a" style="left:0px;top:60.5px;width:2503px;height:60.5px;background:#f3f4f4"></div>
<div class="t" style="left:31.5px;top:80.2px;font-size:24.42px;line-height:24.42px;color:#333;transform:scaleX(0.8897);transform-origin:0 0;">AWS EBS snapshot is not encrypted</div>
<div class="t" style="left:832.8px;top:78.0px;font-size:23.84px;line-height:23.84px;color:#333;transform:scaleX(0.9287);transform-origin:0 0;">Config</div>
<div class="t" style="left:1517.0px;top:80.3px;font-size:24.42px;line-height:24.42px;color:#333;transform:scaleX(0.9234);transform-origin:0 0;">Medium</div>
<div class="t" style="left:1910.4px;top:78.5px;font-size:24.42px;line-height:24.42px;color:#333;transform:scaleX(0.8355);transform-origin:0 0;">Risk</div>
<div class="t" style="left:2194.0px;top:80.2px;font-size:24.42px;line-height:24.42px;color:#333;transform:scaleX(1.0363);transform-origin:0 0;">Misc</div>
<div class="t" style="left:31.5px;top:140.7px;font-size:24.42px;line-height:24.42px;color:#333;transform:scaleX(0.8926);transform-origin:0 0;">GCP VM instances have IP Forwarding enabled</div>
<div class="t" style="left:832.8px;top:138.5px;font-size:23.84px;line-height:23.84px;color:#333;transform:scaleX(0.9287);transform-origin:0 0;">Config</div>
<div class="t" style="left:1517.0px;top:140.8px;font-size:24.42px;line-height:24.42px;color:#333;transform:scaleX(0.9234);transform-origin:0 0;">Medium</div>
<div class="t" style="left:1910.4px;top:139.0px;font-size:24.42px;line-height:24.42px;color:#333;transform:scaleX(0.8355);transform-origin:0 0;">Risk</div>
<div class="t" style="left:2194.0px;top:140.7px;font-size:24.42px;line-height:24.42px;color:#333;transform:scaleX(1.0363);transform-origin:0 0;">Misc</div>
<div class="a" style="left:0px;top:181.5px;width:2503px;height:60.5px;background:#f3f4f4"></div>
<div class="t" style="left:31.5px;top:201.2px;font-size:24.42px;line-height:24.42px;color:#333;transform:scaleX(0.8920);transform-origin:0 0;">Azure PostgreSQL Database Server Firewall rule allow access to all I...</div>
<div class="t" style="left:832.8px;top:199.0px;font-size:23.84px;line-height:23.84px;color:#333;transform:scaleX(0.9287);transform-origin:0 0;">Config</div>
<div class="t" style="left:1517.0px;top:201.3px;font-size:24.42px;line-height:24.42px;color:#333;transform:scaleX(0.8959);transform-origin:0 0;">High</div>
<div class="t" style="left:1910.4px;top:199.5px;font-size:24.42px;line-height:24.42px;color:#333;transform:scaleX(0.8355);transform-origin:0 0;">Risk</div>
<div class="t" style="left:2194.0px;top:201.2px;font-size:24.42px;line-height:24.42px;color:#333;transform:scaleX(1.0363);transform-origin:0 0;">Misc</div>
<div class="t" style="left:31.5px;top:261.7px;font-size:24.42px;line-height:24.42px;color:#333;transform:scaleX(0.8866);transform-origin:0 0;">AWS Elastic Load Balancer (Classic) SSL negotiation policy configure...</div>
<div class="t" style="left:832.8px;top:259.5px;font-size:23.84px;line-height:23.84px;color:#333;transform:scaleX(0.9287);transform-origin:0 0;">Config</div>
<div class="t" style="left:1517.0px;top:261.8px;font-size:24.42px;line-height:24.42px;color:#333;transform:scaleX(0.9234);transform-origin:0 0;">Medium</div>
<div class="t" style="left:1910.4px;top:260.0px;font-size:24.42px;line-height:24.42px;color:#333;transform:scaleX(0.8355);transform-origin:0 0;">Risk</div>
<div class="t" style="left:2194.0px;top:261.7px;font-size:24.42px;line-height:24.42px;color:#333;transform:scaleX(1.0363);transform-origin:0 0;">Misc</div>
<div class="a" style="left:0px;top:302.5px;width:2503px;height:60.5px;background:#f3f4f4"></div>
<div class="t" style="left:31.5px;top:322.2px;font-size:24.42px;line-height:24.42px;color:#333;transform:scaleX(0.9054);transform-origin:0 0;">OCI Object Storage bucket does not emit object events</div>
<div class="t" style="left:832.8px;top:320.0px;font-size:23.84px;line-height:23.84px;color:#333;transform:scaleX(0.9287);transform-origin:0 0;">Config</div>
<div class="t" style="left:1517.0px;top:322.3px;font-size:24.42px;line-height:24.42px;color:#333;transform:scaleX(0.8959);transform-origin:0 0;">High</div>
<div class="t" style="left:1910.4px;top:320.5px;font-size:24.42px;line-height:24.42px;color:#333;transform:scaleX(0.8355);transform-origin:0 0;">Risk</div>
<div class="t" style="left:2194.0px;top:322.2px;font-size:24.42px;line-height:24.42px;color:#333;transform:scaleX(1.0363);transform-origin:0 0;">Misc</div>
<div class="t" style="left:31.5px;top:382.7px;font-size:24.42px;line-height:24.42px;color:#333;transform:scaleX(0.8910);transform-origin:0 0;">Azure SQL database auditing is disabled</div>
<div class="t" style="left:832.8px;top:380.5px;font-size:23.84px;line-height:23.84px;color:#333;transform:scaleX(0.9287);transform-origin:0 0;">Config</div>
<div class="t" style="left:1517.0px;top:382.8px;font-size:24.42px;line-height:24.42px;color:#333;transform:scaleX(0.9234);transform-origin:0 0;">Medium</div>
<div class="t" style="left:1910.4px;top:381.0px;font-size:24.42px;line-height:24.42px;color:#333;transform:scaleX(0.8355);transform-origin:0 0;">Risk</div>
<div class="t" style="left:2194.0px;top:382.7px;font-size:24.42px;line-height:24.42px;color:#333;transform:scaleX(1.0363);transform-origin:0 0;">Misc</div>
<div class="a" style="left:0px;top:423.5px;width:2503px;height:60.5px;background:#f3f4f4"></div>
<div class="t" style="left:31.5px;top:443.2px;font-size:24.42px;line-height:24.42px;color:#333;transform:scaleX(0.9049);transform-origin:0 0;">Azure Function App doesn't have a Managed Service Identity</div>
<div class="t" style="left:832.8px;top:441.0px;font-size:23.84px;line-height:23.84px;color:#333;transform:scaleX(0.9287);transform-origin:0 0;">Config</div>
<div class="t" style="left:1517.0px;top:443.3px;font-size:24.42px;line-height:24.42px;color:#333;transform:scaleX(0.9234);transform-origin:0 0;">Medium</div>
<div class="t" style="left:1910.4px;top:441.5px;font-size:24.42px;line-height:24.42px;color:#333;transform:scaleX(0.8355);transform-origin:0 0;">Risk</div>
<div class="t" style="left:2194.0px;top:443.2px;font-size:24.42px;line-height:24.42px;color:#333;transform:scaleX(1.0363);transform-origin:0 0;">Misc</div>
<svg class="a" style="left:-156px;top:-1071px" width="2720" height="1700"><g transform="translate(942.5 1086.75) scale(1.0)" fill="#4c9cf0"><rect x="0" y="3.6" width="30.4" height="3.5" rx="1.6"/><rect x="0" y="13.2" width="30.4" height="3.5" rx="1.6"/><rect x="0" y="22.6" width="30.4" height="3.5" rx="1.6"/><rect x="13.2" y="0.3" width="3.6" height="8.5" rx="1.6"/><rect x="20.9" y="9.8" width="3.6" height="8.5" rx="1.6"/><rect x="5.9" y="19.4" width="3.6" height="8.5" rx="1.6"/></g><g transform="translate(1273 1087.95)" fill="#3a8ee0"><path d="M19.8 0 L8.3 9.8 L0 26 H9.6 Z"/><path d="M21.5 3.5 L37 26.8 H7.5 L24.5 23.6 L15.4 12.6 Z"/></g><circle cx="1609.2" cy="1104.45" r="5.6" fill="#e39a36"/><circle cx="1625.6" cy="1104.45" r="5.6" fill="#e39a36"/><circle cx="1642.0" cy="1104.45" r="5.6" fill="#e6e6e6"/><path transform="translate(2023 1086.85)" fill="#55a5f5" d="M11.5 0 C10.5 3 7.5 5.5 7.5 9 C7.5 12 10.5 14 11.5 16.5 C12.5 19 11 21.5 9 21.5 C6.5 21.5 5 19 5.5 16 L5.7 10.5 C2.5 13 0 16.5 0 20.5 C0 26 5 30.2 11.5 30.2 C18 30.2 23 26 23 19.5 C23 13 17.5 9 14.5 5.5 C13 4 12 2 11.5 0 Z"/><g transform="translate(942.5 1147.25) scale(1.0)" fill="#4c9cf0"><rect x="0" y="3.6" width="30.4" height="3.5" rx="1.6"/><rect x="0" y="13.2" width="30.4" height="3.5" rx="1.6"/><rect x="0" y="22.6" width="30.4" height="3.5" rx="1.6"/><rect x="13.2" y="0.3" width="3.6" height="8.5" rx="1.6"/><rect x="20.9" y="9.8" width="3.6" height="8.5" rx="1.6"/><rect x="5.9" y="19.4" width="3.6" height="8.5" rx="1.6"/></g><text x="1291.8" y="1166.35" text-anchor="middle" font-family="Liberation Sans" font-size="18" fill="#3a4550" letter-spacing="-0.6">aws</text><path d="M1275 1170.25 Q1292 1177.75 1307.5 1170.05" fill="none" stroke="#f59d1c" stroke-width="2.4"/><path d="M1304.5 1168.25 L1309.8 1168.75 L1308.5 1173.75" fill="none" stroke="#f59d1c" stroke-width="2"/><circle cx="1609.2" cy="1164.95" r="5.6" fill="#e39a36"/><circle cx="1625.6" cy="1164.95" r="5.6" fill="#e39a36"/><circle cx="1642.0" cy="1164.95" r="5.6" fill="#e6e6e6"/><path transform="translate(2023 1147.35)" fill="#55a5f5" d="M11.5 0 C10.5 3 7.5 5.5 7.5 9 C7.5 12 10.5 14 11.5 16.5 C12.5 19 11 21.5 9 21.5 C6.5 21.5 5 19 5.5 16 L5.7 10.5 C2.5 13 0 16.5 0 20.5 C0 26 5 30.2 11.5 30.2 C18 30.2 23 26 23 19.5 C23 13 17.5 9 14.5 5.5 C13 4 12 2 11.5 0 Z"/><g transform="translate(942.5 1207.75) scale(1.0)" fill="#4c9cf0"><rect x="0" y="3.6" width="30.4" height="3.5" rx="1.6"/><rect x="0" y="13.2" width="30.4" height="3.5" rx="1.6"/><rect x="0" y="22.6" width="30.4" height="3.5" rx="1.6"/><rect x="13.2" y="0.3" width="3.6" height="8.5" rx="1.6"/><rect x="20.9" y="9.8" width="3.6" height="8.5" rx="1.6"/><rect x="5.9" y="19.4" width="3.6" height="8.5" rx="1.6"/></g><g transform="translate(1273.9 1207.95)" fill="none" stroke-width="5.6"><path d="M8 9.5 C10.5 3.5 16 0.5 21 1.5 C26 2.5 29.5 6 30.5 10.5" stroke="#dd4b3e"/><path d="M8.5 9 C7.5 11 7.5 12.5 6.5 13.5 C2.5 15 2.5 19.5 2.8 21 C3.5 25 7 26.5 10 26.5 H17.5" stroke="#4c86e8"/><path d="M17.5 26.5 H26.5" stroke="#54b055"/><path d="M18.5 13 C21 10 25 9.5 28.5 11 C33 13 34 18.5 32 22 C31 24 29.5 25.5 26.5 26.5" stroke="#f0b93a"/></g><circle cx="1609.2" cy="1225.45" r="5.6" fill="#e39a36"/><circle cx="1625.6" cy="1225.45" r="5.6" fill="#e39a36"/><circle cx="1642.0" cy="1225.45" r="5.6" fill="#e6e6e6"/><path transform="translate(2023 1207.85)" fill="#55a5f5" d="M11.5 0 C10.5 3 7.5 5.5 7.5 9 C7.5 12 10.5 14 11.5 16.5 C12.5 19 11 21.5 9 21.5 C6.5 21.5 5 19 5.5 16 L5.7 10.5 C2.5 13 0 16.5 0 20.5 C0 26 5 30.2 11.5 30.2 C18 30.2 23 26 23 19.5 C23 13 17.5 9 14.5 5.5 C13 4 12 2 11.5 0 Z"/><g transform="translate(942.5 1268.25) scale(1.0)" fill="#4c9cf0"><rect x="0" y="3.6" width="30.4" height="3.5" rx="1.6"/><rect x="0" y="13.2" width="30.4" height="3.5" rx="1.6"/><rect x="0" y="22.6" width="30.4" height="3.5" rx="1.6"/><rect x="13.2" y="0.3" width="3.6" height="8.5" rx="1.6"/><rect x="20.9" y="9.8" width="3.6" height="8.5" rx="1.6"/><rect x="5.9" y="19.4" width="3.6" height="8.5" rx="1.6"/></g><g transform="translate(1273 1269.45)" fill="#3a8ee0"><path d="M19.8 0 L8.3 9.8 L0 26 H9.6 Z"/><path d="M21.5 3.5 L37 26.8 H7.5 L24.5 23.6 L15.4 12.6 Z"/></g><circle cx="1609.2" cy="1285.95" r="5.6" fill="#c4473f"/><circle cx="1625.6" cy="1285.95" r="5.6" fill="#c4473f"/><circle cx="1642.0" cy="1285.95" r="5.6" fill="#c4473f"/><path transform="translate(2023 1268.35)" fill="#55a5f5" d="M11.5 0 C10.5 3 7.5 5.5 7.5 9 C7.5 12 10.5 14 11.5 16.5 C12.5 19 11 21.5 9 21.5 C6.5 21.5 5 19 5.5 16 L5.7 10.5 C2.5 13 0 16.5 0 20.5 C0 26 5 30.2 11.5 30.2 C18 30.2 23 26 23 19.5 C23 13 17.5 9 14.5 5.5 C13 4 12 2 11.5 0 Z"/><g transform="translate(942.5 1328.75) scale(1.0)" fill="#4c9cf0"><rect x="0" y="3.6" width="30.4" height="3.5" rx="1.6"/><rect x="0" y="13.2" width="30.4" height="3.5" rx="1.6"/><rect x="0" y="22.6" width="30.4" height="3.5" rx="1.6"/><rect x="13.2" y="0.3" width="3.6" height="8.5" rx="1.6"/><rect x="20.9" y="9.8" width="3.6" height="8.5" rx="1.6"/><rect x="5.9" y="19.4" width="3.6" height="8.5" rx="1.6"/></g><text x="1291.8" y="1347.85" text-anchor="middle" font-family="Liberation Sans" font-size="18" fill="#3a4550" letter-spacing="-0.6">aws</text><path d="M1275 1351.75 Q1292 1359.25 1307.5 1351.55" fill="none" stroke="#f59d1c" stroke-width="2.4"/><path d="M1304.5 1349.75 L1309.8 1350.25 L1308.5 1355.25" fill="none" stroke="#f59d1c" stroke-width="2"/><circle cx="1609.2" cy="1346.45" r="5.6" fill="#e39a36"/><circle cx="1625.6" cy="1346.45" r="5.6" fill="#e39a36"/><circle cx="1642.0" cy="1346.45" r="5.6" fill="#e6e6e6"/><path transform="translate(2023 1328.85)" fill="#55a5f5" d="M11.5 0 C10.5 3 7.5 5.5 7.5 9 C7.5 12 10.5 14 11.5 16.5 C12.5 19 11 21.5 9 21.5 C6.5 21.5 5 19 5.5 16 L5.7 10.5 C2.5 13 0 16.5 0 20.5 C0 26 5 30.2 11.5 30.2 C18 30.2 23 26 23 19.5 C23 13 17.5 9 14.5 5.5 C13 4 12 2 11.5 0 Z"/><g transform="translate(942.5 1389.25) scale(1.0)" fill="#4c9cf0"><rect x="0" y="3.6" width="30.4" height="3.5" rx="1.6"/><rect x="0" y="13.2" width="30.4" height="3.5" rx="1.6"/><rect x="0" y="22.6" width="30.4" height="3.5" rx="1.6"/><rect x="13.2" y="0.3" width="3.6" height="8.5" rx="1.6"/><rect x="20.9" y="9.8" width="3.6" height="8.5" rx="1.6"/><rect x="5.9" y="19.4" width="3.6" height="8.5" rx="1.6"/></g><rect x="1278.1" y="1392.25" width="35.4" height="22" rx="11" fill="none" stroke="#d73a2c" stroke-width="4"/><circle cx="1609.2" cy="1406.95" r="5.6" fill="#c4473f"/><circle cx="1625.6" cy="1406.95" r="5.6" fill="#c4473f"/><circle cx="1642.0" cy="1406.95" r="5.6" fill="#c4473f"/><path transform="translate(2023 1389.35)" fill="#55a5f5" d="M11.5 0 C10.5 3 7.5 5.5 7.5 9 C7.5 12 10.5 14 11.5 16.5 C12.5 19 11 21.5 9 21.5 C6.5 21.5 5 19 5.5 16 L5.7 10.5 C2.5 13 0 16.5 0 20.5 C0 26 5 30.2 11.5 30.2 C18 30.2 23 26 23 19.5 C23 13 17.5 9 14.5 5.5 C13 4 12 2 11.5 0 Z"/><g transform="translate(942.5 1449.75) scale(1.0)" fill="#4c9cf0"><rect x="0" y="3.6" width="30.4" height="3.5" rx="1.6"/><rect x="0" y="13.2" width="30.4" height="3.5" rx="1.6"/><rect x="0" y="22.6" width="30.4" height="3.5" rx="1.6"/><rect x="13.2" y="0.3" width="3.6" height="8.5" rx="1.6"/><rect x="20.9" y="9.8" width="3.6" height="8.5" rx="1.6"/><rect x="5.9" y="19.4" width="3.6" height="8.5" rx="1.6"/></g><g transform="translate(1273 1450.95)" fill="#3a8ee0"><path d="M19.8 0 L8.3 9.8 L0 26 H9.6 Z"/><path d="M21.5 3.5 L37 26.8 H7.5 L24.5 23.6 L15.4 12.6 Z"/></g><circle cx="1609.2" cy="1467.45" r="5.6" fill="#e39a36"/><circle cx="1625.6" cy="1467.45" r="5.6" fill="#e39a36"/><circle cx="1642.0" cy="1467.45" r="5.6" fill="#e6e6e6"/><path transform="translate(2023 1449.85)" fill="#55a5f5" d="M11.5 0 C10.5 3 7.5 5.5 7.5 9 C7.5 12 10.5 14 11.5 16.5 C12.5 19 11 21.5 9 21.5 C6.5 21.5 5 19 5.5 16 L5.7 10.5 C2.5 13 0 16.5 0 20.5 C0 26 5 30.2 11.5 30.2 C18 30.2 23 26 23 19.5 C23 13 17.5 9 14.5 5.5 C13 4 12 2 11.5 0 Z"/><g transform="translate(942.5 1510.25) scale(1.0)" fill="#4c9cf0"><rect x="0" y="3.6" width="30.4" height="3.5" rx="1.6"/><rect x="0" y="13.2" width="30.4" height="3.5" rx="1.6"/><rect x="0" y="22.6" width="30.4" height="3.5" rx="1.6"/><rect x="13.2" y="0.3" width="3.6" height="8.5" rx="1.6"/><rect x="20.9" y="9.8" width="3.6" height="8.5" rx="1.6"/><rect x="5.9" y="19.4" width="3.6" height="8.5" rx="1.6"/></g><g transform="translate(1273 1511.45)" fill="#3a8ee0"><path d="M19.8 0 L8.3 9.8 L0 26 H9.6 Z"/><path d="M21.5 3.5 L37 26.8 H7.5 L24.5 23.6 L15.4 12.6 Z"/></g><circle cx="1609.2" cy="1527.95" r="5.6" fill="#e39a36"/><circle cx="1625.6" cy="1527.95" r="5.6" fill="#e39a36"/><circle cx="1642.0" cy="1527.95" r="5.6" fill="#e6e6e6"/><path transform="translate(2023 1510.35)" fill="#55a5f5" d="M11.5 0 C10.5 3 7.5 5.5 7.5 9 C7.5 12 10.5 14 11.5 16.5 C12.5 19 11 21.5 9 21.5 C6.5 21.5 5 19 5.5 16 L5.7 10.5 C2.5 13 0 16.5 0 20.5 C0 26 5 30.2 11.5 30.2 C18 30.2 23 26 23 19.5 C23 13 17.5 9 14.5 5.5 C13 4 12 2 11.5 0 Z"/></svg>
</div>
<div class="a" style="left:2388px;top:1008px;width:7px;height:539.5px;background:linear-gradient(90deg,rgba(0,0,0,0),rgba(0,0,0,.06))"></div>
<div class="a" style="left:2395px;top:1008px;width:264px;height:539.5px;background:#fff;overflow:hidden">
<div class="a" style="left:0px;top:61px;width:264px;height:2px;background:#e6e6e6"></div>
<div class="a" style="left:0px;top:123.5px;width:264px;height:60.5px;background:#f3f4f4"></div>
<div class="a" style="left:0px;top:244.5px;width:264px;height:60.5px;background:#f3f4f4"></div>
<div class="a" style="left:0px;top:365.5px;width:264px;height:60.5px;background:#f3f4f4"></div>
<div class="a" style="left:0px;top:486.5px;width:264px;height:60.5px;background:#f3f4f4"></div>
</div>
<div class="t" style="left:2425.7px;top:1026.7px;font-size:23.69px;line-height:23.69px;color:#333;font-weight:bold;transform:scaleX(0.8759);transform-origin:0 0;">Actions</div>
<svg class="a" style="left:2400px;top:1060px" width="200" height="490"><g transform="translate(32.9 31.100000000000044)" fill="none" stroke="#c8c8c8" stroke-width="2.8"><path d="M17 1.4 H2.8 Q1.4 1.4 1.4 2.8 V21.5 Q1.4 22.9 2.8 22.9 H20.5 Q21.9 22.9 21.9 21.5 V12"/></g><path transform="translate(32.9 31.100000000000044)" d="M8.5 18.5 L9.3 12.6 L22.6 -0.7 L27.3 4 L14 17.3 Z M23.6 -1.7 L25.3 -3.4 Q26 -4 26.7 -3.4 L29.5 -0.6 Q30 0 29.5 0.7 L28 2.2 Z" fill="#c8c8c8"/><g transform="translate(85.8 26.000000000000046)" fill="#c8c8c8"><rect x="7.2" y="0" width="23" height="23" rx="2.6"/><path d="M0 10 Q0 7.7 2.4 7.7 H5.4 V24.8 H22.6 V28 Q22.6 30.3 20.2 30.3 H2.4 Q0 30.3 0 28 Z"/></g><g transform="translate(140.4 26.000000000000046)" fill="#c8c8c8"><path d="M13.25 2 C7.5 2 5.5 7 5.5 12 C5.5 18 4 20.5 0.5 23.5 Q0 24.2 0.8 24.2 H25.7 Q26.5 24.2 26 23.5 C22.5 20.5 21 18 21 12 C21 7 19 2 13.25 2 Z"/><rect x="11.5" y="0" width="3.5" height="4" rx="1.5"/><path d="M9.8 26 H16.7 Q15.5 30.3 13.25 30.3 Q11 30.3 9.8 26 Z"/></g><g transform="translate(32.9 91.60000000000005)" fill="none" stroke="#c8c8c8" stroke-width="2.8"><path d="M17 1.4 H2.8 Q1.4 1.4 1.4 2.8 V21.5 Q1.4 22.9 2.8 22.9 H20.5 Q21.9 22.9 21.9 21.5 V12"/></g><path transform="translate(32.9 91.60000000000005)" d="M8.5 18.5 L9.3 12.6 L22.6 -0.7 L27.3 4 L14 17.3 Z M23.6 -1.7 L25.3 -3.4 Q26 -4 26.7 -3.4 L29.5 -0.6 Q30 0 29.5 0.7 L28 2.2 Z" fill="#c8c8c8"/><g transform="translate(85.8 86.50000000000004)" fill="#c8c8c8"><rect x="7.2" y="0" width="23" height="23" rx="2.6"/><path d="M0 10 Q0 7.7 2.4 7.7 H5.4 V24.8 H22.6 V28 Q22.6 30.3 20.2 30.3 H2.4 Q0 30.3 0 28 Z"/></g><g transform="translate(140.4 86.50000000000004)" fill="#c8c8c8"><path d="M13.25 2 C7.5 2 5.5 7 5.5 12 C5.5 18 4 20.5 0.5 23.5 Q0 24.2 0.8 24.2 H25.7 Q26.5 24.2 26 23.5 C22.5 20.5 21 18 21 12 C21 7 19 2 13.25 2 Z"/><rect x="11.5" y="0" width="3.5" height="4" rx="1.5"/><path d="M9.8 26 H16.7 Q15.5 30.3 13.25 30.3 Q11 30.3 9.8 26 Z"/></g><g transform="translate(32.9 152.10000000000005)" fill="none" stroke="#c8c8c8" stroke-width="2.8"><path d="M17 1.4 H2.8 Q1.4 1.4 1.4 2.8 V21.5 Q1.4 22.9 2.8 22.9 H20.5 Q21.9 22.9 21.9 21.5 V12"/></g><path transform="translate(32.9 152.10000000000005)" d="M8.5 18.5 L9.3 12.6 L22.6 -0.7 L27.3 4 L14 17.3 Z M23.6 -1.7 L25.3 -3.4 Q26 -4 26.7 -3.4 L29.5 -0.6 Q30 0 29.5 0.7 L28 2.2 Z" fill="#c8c8c8"/><g transform="translate(85.8 147.00000000000006)" fill="#c8c8c8"><rect x="7.2" y="0" width="23" height="23" rx="2.6"/><path d="M0 10 Q0 7.7 2.4 7.7 H5.4 V24.8 H22.6 V28 Q22.6 30.3 20.2 30.3 H2.4 Q0 30.3 0 28 Z"/></g><g transform="translate(140.4 147.00000000000006)" fill="#c8c8c8"><path d="M13.25 2 C7.5 2 5.5 7 5.5 12 C5.5 18 4 20.5 0.5 23.5 Q0 24.2 0.8 24.2 H25.7 Q26.5 24.2 26 23.5 C22.5 20.5 21 18 21 12 C21 7 19 2 13.25 2 Z"/><rect x="11.5" y="0" width="3.5" height="4" rx="1.5"/><path d="M9.8 26 H16.7 Q15.5 30.3 13.25 30.3 Q11 30.3 9.8 26 Z"/></g><g transform="translate(32.9 212.60000000000005)" fill="none" stroke="#c8c8c8" stroke-width="2.8"><path d="M17 1.4 H2.8 Q1.4 1.4 1.4 2.8 V21.5 Q1.4 22.9 2.8 22.9 H20.5 Q21.9 22.9 21.9 21.5 V12"/></g><path transform="translate(32.9 212.60000000000005)" d="M8.5 18.5 L9.3 12.6 L22.6 -0.7 L27.3 4 L14 17.3 Z M23.6 -1.7 L25.3 -3.4 Q26 -4 26.7 -3.4 L29.5 -0.6 Q30 0 29.5 0.7 L28 2.2 Z" fill="#c8c8c8"/><g transform="translate(85.8 207.50000000000006)" fill="#c8c8c8"><rect x="7.2" y="0" width="23" height="23" rx="2.6"/><path d="M0 10 Q0 7.7 2.4 7.7 H5.4 V24.8 H22.6 V28 Q22.6 30.3 20.2 30.3 H2.4 Q0 30.3 0 28 Z"/></g><g transform="translate(140.4 207.50000000000006)" fill="#c8c8c8"><path d="M13.25 2 C7.5 2 5.5 7 5.5 12 C5.5 18 4 20.5 0.5 23.5 Q0 24.2 0.8 24.2 H25.7 Q26.5 24.2 26 23.5 C22.5 20.5 21 18 21 12 C21 7 19 2 13.25 2 Z"/><rect x="11.5" y="0" width="3.5" height="4" rx="1.5"/><path d="M9.8 26 H16.7 Q15.5 30.3 13.25 30.3 Q11 30.3 9.8 26 Z"/></g><g transform="translate(32.9 273.1)" fill="none" stroke="#c8c8c8" stroke-width="2.8"><path d="M17 1.4 H2.8 Q1.4 1.4 1.4 2.8 V21.5 Q1.4 22.9 2.8 22.9 H20.5 Q21.9 22.9 21.9 21.5 V12"/></g><path transform="translate(32.9 273.1)" d="M8.5 18.5 L9.3 12.6 L22.6 -0.7 L27.3 4 L14 17.3 Z M23.6 -1.7 L25.3 -3.4 Q26 -4 26.7 -3.4 L29.5 -0.6 Q30 0 29.5 0.7 L28 2.2 Z" fill="#c8c8c8"/><g transform="translate(85.8 268.00000000000006)" fill="#c8c8c8"><rect x="7.2" y="0" width="23" height="23" rx="2.6"/><path d="M0 10 Q0 7.7 2.4 7.7 H5.4 V24.8 H22.6 V28 Q22.6 30.3 20.2 30.3 H2.4 Q0 30.3 0 28 Z"/></g><g transform="translate(140.4 268.00000000000006)" fill="#c8c8c8"><path d="M13.25 2 C7.5 2 5.5 7 5.5 12 C5.5 18 4 20.5 0.5 23.5 Q0 24.2 0.8 24.2 H25.7 Q26.5 24.2 26 23.5 C22.5 20.5 21 18 21 12 C21 7 19 2 13.25 2 Z"/><rect x="11.5" y="0" width="3.5" height="4" rx="1.5"/><path d="M9.8 26 H16.7 Q15.5 30.3 13.25 30.3 Q11 30.3 9.8 26 Z"/></g><g transform="translate(32.9 333.6)" fill="none" stroke="#c8c8c8" stroke-width="2.8"><path d="M17 1.4 H2.8 Q1.4 1.4 1.4 2.8 V21.5 Q1.4 22.9 2.8 22.9 H20.5 Q21.9 22.9 21.9 21.5 V12"/></g><path transform="translate(32.9 333.6)" d="M8.5 18.5 L9.3 12.6 L22.6 -0.7 L27.3 4 L14 17.3 Z M23.6 -1.7 L25.3 -3.4 Q26 -4 26.7 -3.4 L29.5 -0.6 Q30 0 29.5 0.7 L28 2.2 Z" fill="#c8c8c8"/><g transform="translate(85.8 328.50000000000006)" fill="#c8c8c8"><rect x="7.2" y="0" width="23" height="23" rx="2.6"/><path d="M0 10 Q0 7.7 2.4 7.7 H5.4 V24.8 H22.6 V28 Q22.6 30.3 20.2 30.3 H2.4 Q0 30.3 0 28 Z"/></g><g transform="translate(140.4 328.50000000000006)" fill="#c8c8c8"><path d="M13.25 2 C7.5 2 5.5 7 5.5 12 C5.5 18 4 20.5 0.5 23.5 Q0 24.2 0.8 24.2 H25.7 Q26.5 24.2 26 23.5 C22.5 20.5 21 18 21 12 C21 7 19 2 13.25 2 Z"/><rect x="11.5" y="0" width="3.5" height="4" rx="1.5"/><path d="M9.8 26 H16.7 Q15.5 30.3 13.25 30.3 Q11 30.3 9.8 26 Z"/></g><g transform="translate(32.9 394.1)" fill="none" stroke="#c8c8c8" stroke-width="2.8"><path d="M17 1.4 H2.8 Q1.4 1.4 1.4 2.8 V21.5 Q1.4 22.9 2.8 22.9 H20.5 Q21.9 22.9 21.9 21.5 V12"/></g><path transform="translate(32.9 394.1)" d="M8.5 18.5 L9.3 12.6 L22.6 -0.7 L27.3 4 L14 17.3 Z M23.6 -1.7 L25.3 -3.4 Q26 -4 26.7 -3.4 L29.5 -0.6 Q30 0 29.5 0.7 L28 2.2 Z" fill="#c8c8c8"/><g transform="translate(85.8 389.00000000000006)" fill="#c8c8c8"><rect x="7.2" y="0" width="23" height="23" rx="2.6"/><path d="M0 10 Q0 7.7 2.4 7.7 H5.4 V24.8 H22.6 V28 Q22.6 30.3 20.2 30.3 H2.4 Q0 30.3 0 28 Z"/></g><g transform="translate(140.4 389.00000000000006)" fill="#c8c8c8"><path d="M13.25 2 C7.5 2 5.5 7 5.5 12 C5.5 18 4 20.5 0.5 23.5 Q0 24.2 0.8 24.2 H25.7 Q26.5 24.2 26 23.5 C22.5 20.5 21 18 21 12 C21 7 19 2 13.25 2 Z"/><rect x="11.5" y="0" width="3.5" height="4" rx="1.5"/><path d="M9.8 26 H16.7 Q15.5 30.3 13.25 30.3 Q11 30.3 9.8 26 Z"/></g><g transform="translate(32.9 454.6)" fill="none" stroke="#c8c8c8" stroke-width="2.8"><path d="M17 1.4 H2.8 Q1.4 1.4 1.4 2.8 V21.5 Q1.4 22.9 2.8 22.9 H20.5 Q21.9 22.9 21.9 21.5 V12"/></g><path transform="translate(32.9 454.6)" d="M8.5 18.5 L9.3 12.6 L22.6 -0.7 L27.3 4 L14 17.3 Z M23.6 -1.7 L25.3 -3.4 Q26 -4 26.7 -3.4 L29.5 -0.6 Q30 0 29.5 0.7 L28 2.2 Z" fill="#c8c8c8"/><g transform="translate(85.8 449.50000000000006)" fill="#c8c8c8"><rect x="7.2" y="0" width="23" height="23" rx="2.6"/><path d="M0 10 Q0 7.7 2.4 7.7 H5.4 V24.8 H22.6 V28 Q22.6 30.3 20.2 30.3 H2.4 Q0 30.3 0 28 Z"/></g><g transform="translate(140.4 449.50000000000006)" fill="#c8c8c8"><path d="M13.25 2 C7.5 2 5.5 7 5.5 12 C5.5 18 4 20.5 0.5 23.5 Q0 24.2 0.8 24.2 H25.7 Q26.5 24.2 26 23.5 C22.5 20.5 21 18 21 12 C21 7 19 2 13.25 2 Z"/><rect x="11.5" y="0" width="3.5" height="4" rx="1.5"/><path d="M9.8 26 H16.7 Q15.5 30.3 13.25 30.3 Q11 30.3 9.8 26 Z"/></g></svg>
<div class="a" style="left:2659px;top:1008px;width:28px;height:539.5px;background:#f8f8f8;border-left:2px solid #ececec"></div>
<div class="a" style="left:2667px;top:1014.6px;width:15.2px;height:173px;background:#c1c1c1;border-radius:8px"></div>
<div class="a" style="left:156px;top:1546.5px;width:2531px;height:1.5px;background:#e8e8e8"></div>
<div class="a" style="left:153px;top:1548px;width:2536px;height:27px;background:#f8f8f8;border-left:2px solid #e8e8e8;border-right:2px solid #e8e8e8"></div>
<div class="a" style="left:160.6px;top:1554.6px;width:1248px;height:14.6px;background:#c1c1c1;border-radius:8px"></div>
<div class="a" style="left:153px;top:1574.3px;width:2536px;height:95.1px;background:#fff;border:2px solid #e8e8e8"></div>
<div class="t" style="left:185.9px;top:1609.7px;font-size:23.69px;line-height:23.69px;color:#333;transform:scaleX(0.9309);transform-origin:0 0;">Displaying 1 - 25 of 764</div>
<div class="t" style="left:1851.5px;top:1608.5px;font-size:27.62px;line-height:27.62px;color:#333;transform:scaleX(0.8774);transform-origin:0 0;">Rows</div>
<div class="a" style="left:1929.3px;top:1592.8px;width:126.7px;height:58.8px;background:#fff;border:2px solid #dadada;border-radius:8px"></div>
<div class="t" style="left:1961.2px;top:1609.6px;font-size:26.31px;line-height:26.31px;color:#2b6ec4;transform:scaleX(0.8477);transform-origin:0 0;">25</div>
<div class="t" style="left:2073.4px;top:1608.5px;font-size:27.62px;line-height:27.62px;color:#333;transform:scaleX(0.8359);transform-origin:0 0;">Page</div>
<div class="a" style="left:2144.4px;top:1592.8px;width:114px;height:58.8px;background:#fff;border:2px solid #dadada;border-radius:8px"></div>
<div class="t" style="left:2177.5px;top:1609.6px;font-size:26.31px;line-height:26.31px;color:#2b6ec4;">1</div>
<div class="t" style="left:2273.0px;top:1608.5px;font-size:27.62px;line-height:27.62px;color:#333;transform:scaleX(0.9525);transform-origin:0 0;">of 31</div>
<div class="a" style="left:2363.8px;top:1592.8px;width:62.7px;height:58.8px;background:#fff;border:2px solid #dadada;border-radius:8px"></div>
<div class="a" style="left:2442.5px;top:1592.8px;width:63.5px;height:58.8px;background:#fff;border:2px solid #dadada;border-radius:8px"></div>
<svg class="a" style="left:1990px;top:1605px" width="540" height="40"><path d="M12.8 13.5 L20 20.8 L27.2 13.5" fill="none" stroke="#2b6ec4" stroke-width="2.4"/><path d="M214.5 13.5 L221.7 20.8 L228.9 13.5" fill="none" stroke="#2b6ec4" stroke-width="2.4"/><path d="M410.5 9.5 L402 17.5 L410.5 25.5" fill="none" stroke="#bbb" stroke-width="2.4"/><path d="M480 9.5 L488.5 17.5 L480 25.5" fill="none" stroke="#333" stroke-width="2.6"/></svg>
<svg class="a" style="left:2540px;top:1530px" width="180" height="170"><circle cx="57.5" cy="65.5" r="39.5" fill="#dde8f3" opacity="0.85"/><circle cx="107.8" cy="98" r="55" fill="rgba(0,0,0,0.05)"/><circle cx="107.8" cy="98" r="53" fill="#3a80b8"/><circle cx="57.6" cy="65.8" r="25.2" fill="#3a80b8" stroke="#fff" stroke-width="0"/><path d="M94.5 89 C94.5 79 101.5 74.5 108.5 74.5 C116 74.5 122 79.5 122 87 C122 96 111 98 111 108" fill="none" stroke="#fff" stroke-width="9.5" stroke-linecap="round"/><circle cx="110.5" cy="122" r="5.8" fill="#fff"/></svg>
<div class="t" style="left:2589.5px;top:1582.9px;font-size:29.07px;line-height:29.07px;color:#fff;">7</div>
</body></html>
